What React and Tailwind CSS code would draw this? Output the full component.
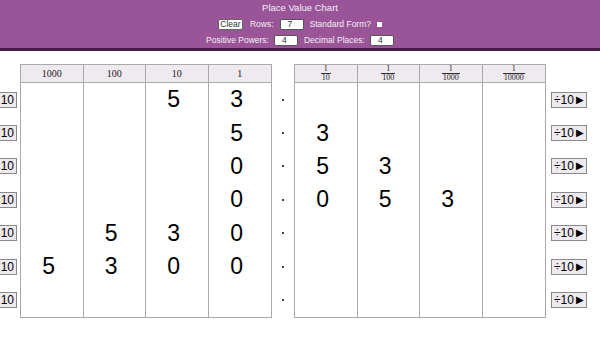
import React from "react";

const leftHeads = ["1000", "100", "10", "1"];
const rightHeads = ["10", "100", "1000", "10000"];

// each row: [1000, 100, 10, 1, 1/10, 1/100, 1/1000, 1/10000]
const rows = [
  ["", "", "5", "3", "", "", "", ""],
  ["", "", "", "5", "3", "", "", ""],
  ["", "", "", "0", "5", "3", "", ""],
  ["", "", "", "0", "0", "5", "3", ""],
  ["", "5", "3", "0", "", "", "", ""],
  ["5", "3", "0", "0", "", "", "", ""],
  ["", "", "", "", "", "", "", ""],
];

const ChartTable = ({ heads, fraction, offset }) => (
  <div className="w-[252px] border border-[#a9a9a9] bg-white">
    <div className="grid grid-cols-4 h-[18px] bg-[#efe9f0] border-b border-[#a9a9a9]">
      {heads.map((h, i) => (
        <div
          key={h}
          className={`flex items-center justify-center font-['Liberation_Serif',serif] text-[#222] ${i < 3 ? "border-r border-[#a9a9a9]" : ""}`}
        >
          {fraction ? (
            <div className="flex flex-col items-center text-[8px] leading-[7.5px]">
              <span>1</span>
              <span className="border-t border-[#333] px-[1px] pt-[0.5px]">{h}</span>
            </div>
          ) : (
            <span className="text-[10px]">{h}</span>
          )}
        </div>
      ))}
    </div>
    {rows.map((r, ri) => (
      <div key={ri} className="grid grid-cols-4 h-[33.4px]">
        {[0, 1, 2, 3].map((c) => (
          <div
            key={c}
            className={`flex items-center justify-center pr-[6px] text-[23px] leading-none text-black ${c < 3 ? "border-r border-[#a9a9a9]" : ""}`}
          >
            {r[offset + c]}
          </div>
        ))}
      </div>
    ))}
  </div>
);

const SideButton = ({ children }) => (
  <button className="h-[16px] px-[2px] flex items-center gap-[2px] bg-[#efe9f0] border border-[#8a8a8a] text-[12px] leading-none text-black whitespace-nowrap shrink-0">
    {children}
  </button>
);

export default function App() {
  return (
    <div className="w-[600px] h-[338px] overflow-hidden bg-white font-['Liberation_Sans',Arial,sans-serif]">
      <header className="h-[51px] bg-[#9a5598] border-b-[3px] border-[#4b1a48] flex flex-col items-center text-[#f4eef4]">
        <h1 className="mt-[2px] text-[9.5px] leading-[12px]">Place Value Chart</h1>
        <div className="mt-[5px] flex items-center h-[11px] text-[8.5px]">
          <button className="h-[11px] w-[25px] rounded-[2px] bg-white border border-[#666] text-[#333] text-[8.5px] leading-none">
            Clear
          </button>
          <span className="ml-[7px]">Rows:</span>
          <span className="ml-[6px] w-[24px] h-[11px] rounded-[2px] bg-white border border-[#555] text-[#333] pl-[7px] leading-[9px]">7</span>
          <span className="ml-[6px]">Standard Form?</span>
          <span className="ml-[6px] w-[5px] h-[5px] bg-white" />
        </div>
        <div className="mt-[5px] flex items-center h-[11px] text-[8.5px]">
          <span>Positive Powers:</span>
          <span className="ml-[5px] w-[24px] h-[11px] rounded-[2px] bg-white border border-[#555] text-[#333] pl-[7px] leading-[9px]">4</span>
          <span className="ml-[6px]">Decimal Places:</span>
          <span className="ml-[5px] w-[24px] h-[11px] rounded-[2px] bg-white border border-[#555] text-[#333] pl-[7px] leading-[9px]">4</span>
        </div>
      </header>

      <div className="flex mt-[13px]">
        <div className="w-[50px] ml-[-30px] pt-[19px] flex flex-col">
          {rows.map((_, i) => (
            <div key={i} className="h-[33.4px] flex items-center justify-end pr-[3px]">
              <SideButton>
                <span className="text-[10px]">◀</span>×10
              </SideButton>
            </div>
          ))}
        </div>

        <ChartTable heads={leftHeads} offset={0} />

        <div className="w-[22px] pt-[19px] flex flex-col">
          {rows.map((_, i) => (
            <div key={i} className="h-[33.4px] flex items-center justify-center">
              <span className="w-[2px] h-[2px] bg-black rounded-full" />
            </div>
          ))}
        </div>

        <ChartTable heads={rightHeads} fraction offset={4} />

        <div className="pl-[5px] pt-[19px] flex flex-col">
          {rows.map((_, i) => (
            <div key={i} className="h-[33.4px] flex items-center">
              <SideButton>
                ÷10<span className="text-[10px]">▶</span>
              </SideButton>
            </div>
          ))}
        </div>
      </div>
    </div>
  );
}
